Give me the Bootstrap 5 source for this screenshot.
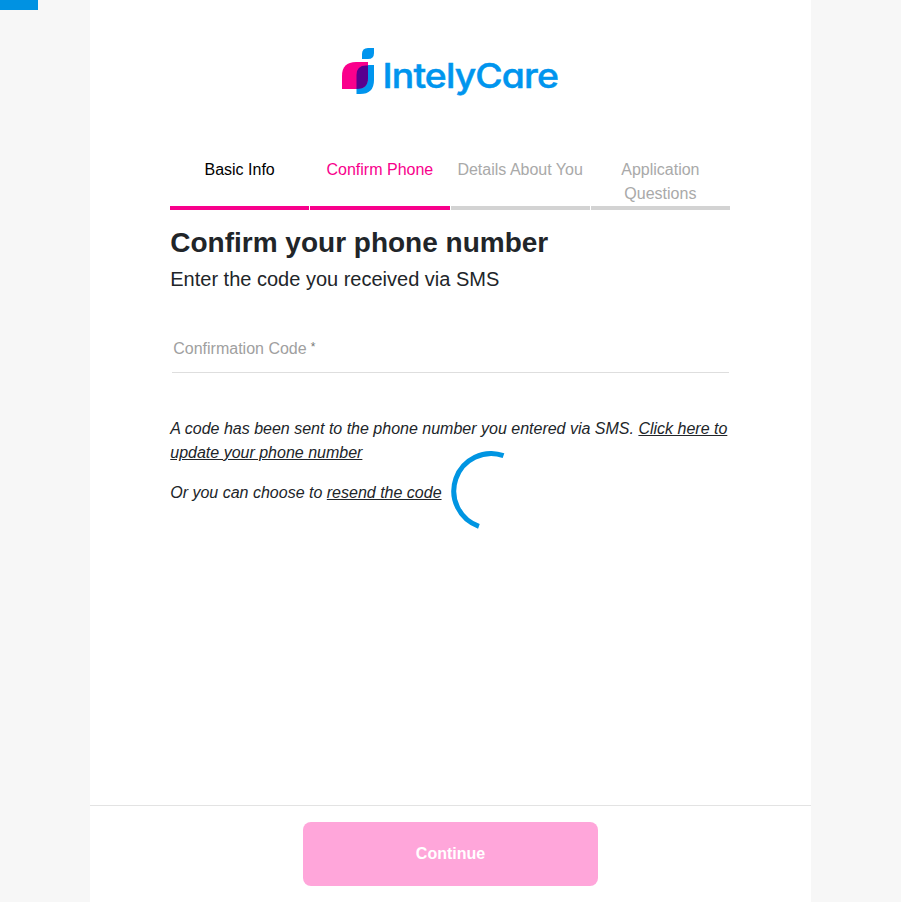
<!DOCTYPE html>
<html lang="en">
<head>
<meta charset="utf-8">
<meta name="viewport" content="width=device-width, initial-scale=1">
<title>IntelyCare - Confirm Phone</title>
<link href="https://cdn.jsdelivr.net/npm/bootstrap@5.3.0/dist/css/bootstrap.min.css" rel="stylesheet">
<style>
body{background:#f7f7f7;font-family:"Liberation Sans",Arial,sans-serif;color:#212529}
.load-bar{width:38px;height:10px;background:#0092e2}
.panel{width:721px;height:902px}
.logo{margin-top:46px;margin-right:1px;height:50px}
.wordmark{font:500 34.5px Inter,sans-serif;font-feature-settings:"cv11" 1;letter-spacing:-.8px;fill:#0095ee;stroke:#0095ee;stroke-width:.5px}
.content{width:560px;margin-right:.5px}
.steps{margin:62px .25px 0 -.25px;height:52px;gap:1px}
.step{flex:1 1 0;min-width:0;border-bottom:4px solid #d3d3d3;color:#a9a9a9;line-height:24px}
.step span{display:block}
.step-done{color:#000;border-color:#f8008c}
.step-current{color:#f8008c;border-color:#f8008c}
.title{font-size:28px;line-height:33.6px;margin:16px 0 0}
.subtitle{font-size:20px;line-height:24px;margin:7px 0 0}
.code-field{margin:46px 1px 0 2px;height:36px;border-bottom:1px solid #dedede;padding:0 1px;line-height:24px;color:#a0a0a0;cursor:text}
.required-mark{font-size:12px;line-height:20px;color:#777}
.notes{margin-top:44px}
.notes a{color:#212529}
.footer-bar{height:97px;border-top:1px solid #e3e3e3;padding-top:16px}
.continue-btn,.continue-btn:disabled{width:295px;height:64px;border:0;border-radius:8px;background:#ffa6da;color:#fff;opacity:1}
.spinner{z-index:5}
</style>
<script src="https://cdn.jsdelivr.net/npm/bootstrap@5.3.0/dist/js/bootstrap.bundle.min.js"></script>
</head>
<body class="overflow-hidden">
<div class="load-bar position-absolute top-0 start-0"></div>
<main class="panel bg-white mx-auto d-flex flex-column align-items-center">
  <svg class="logo flex-shrink-0" width="220" height="50" viewBox="340 46 220 50" role="img" aria-label="IntelyCare">
    <path fill="#0095ee" d="M362 59V54Q362 48 368 48H374V53Q374 59 368 59Z"/>
    <path fill="#fa008c" d="M342 89V76Q342 62 356 62H368V78Q368 89 357 89Z"/>
    <path fill="#0095ee" d="M368 65H374V80Q374 94 360 94H356.500V88H362Q368 86 368 77Z"/>
    <path fill="#58008f" d="M356.500 89V75Q356.500 65.500 366 65.500H368V78Q368 89 357 89Z"/>
    <text class="wordmark" y="88" x="382.500" textLength="175.500" lengthAdjust="spacingAndGlyphs">IntelyCare</text>
  </svg>
  <div class="content flex-grow-1">
    <div class="steps d-flex text-center">
      <div class="step step-done">Basic Info</div>
      <div class="step step-current">Confirm Phone</div>
      <div class="step">Details About You</div>
      <div class="step"><span>Application</span><span>Questions</span></div>
    </div>
    <h1 class="title fw-bold text-nowrap">Confirm your phone number</h1>
    <p class="subtitle">Enter the code you received via SMS</p>
    <label class="code-field d-flex gap-1">Confirmation Code <span class="required-mark">*</span></label>
    <div class="notes fst-italic">
      <p class="mb-3">A code has been sent to the phone number you entered via SMS. <a href="#">Click here to<br>update your phone number</a></p>
      <p class="mb-0">Or you can choose to <a href="#">resend the code</a></p>
    </div>
  </div>
  <footer class="footer-bar w-100 d-flex justify-content-center">
    <button class="continue-btn btn fw-bold" type="button" disabled>Continue</button>
  </footer>
</main>
<svg class="spinner position-absolute top-50 start-50" width="80" height="80" viewBox="0.500 0 80 80" aria-label="Loading">
  <path d="M53 4.700A37.300 37.300 0 1 0 28.400 75.300" fill="none" stroke="#0095e2" stroke-width="5"/>
</svg>
</body>
</html>
